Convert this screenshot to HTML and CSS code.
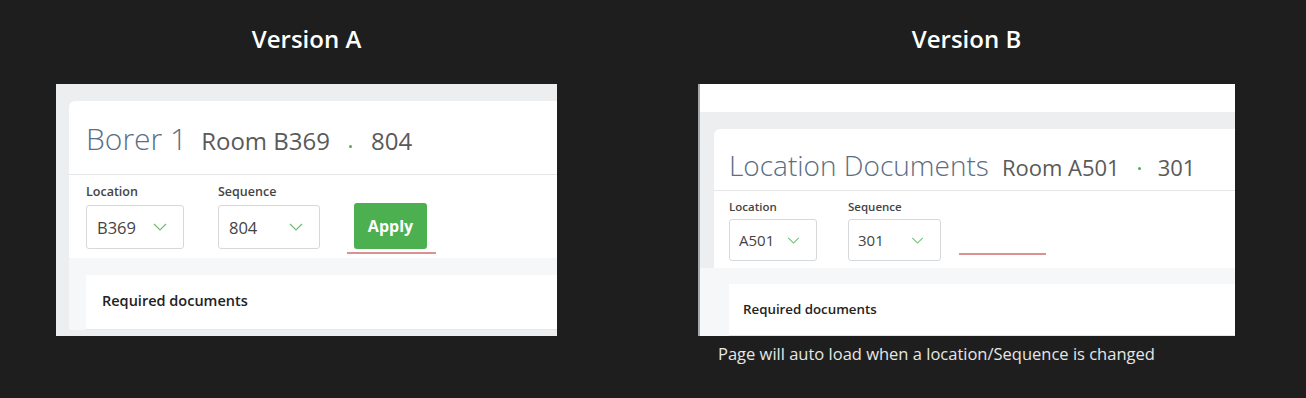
FILE: index.html
```html
<!DOCTYPE html>
<html lang="en">
<head>
  <meta charset="UTF-8">
  <title>Version A / Version B</title>
  <link rel="stylesheet" href="styles.css">
</head>
<body>

  <div class="compare">

    <!-- Version A: filters with an Apply button -->
    <div class="version version-a">
      <h2 class="version-title">Version A</h2>
      <div class="shot shot-a">
        <div class="page-head">
          <div class="head-title">
            <span class="head-name">Borer 1</span>
            <span class="head-room">Room B369</span>
            <span class="head-dot"></span>
            <span class="head-room">804</span>
          </div>
          <div class="filters">
            <div class="field">
              <label>Location</label>
              <div class="select select-loc">
                <span>B369</span>
                <svg class="chevron" viewBox="0 0 14 8"><path d="M1 1l6 6 6-6"/></svg>
              </div>
            </div>
            <div class="field">
              <label>Sequence</label>
              <div class="select select-seq">
                <span>804</span>
                <svg class="chevron" viewBox="0 0 14 8"><path d="M1 1l6 6 6-6"/></svg>
              </div>
            </div>
            <div class="apply-wrap">
              <button class="apply">Apply</button>
              <div class="mark"></div>
            </div>
          </div>
        </div>
        <div class="docs">
          <div class="docs-head">Required documents</div>
        </div>
      </div>
    </div>

    <!-- Version B: auto load, no button -->
    <div class="version version-b">
      <h2 class="version-title">Version B</h2>
      <div class="shot shot-b">
        <div class="topbar"></div>
        <div class="page-head">
          <div class="head-title">
            <span class="head-name">Location Documents</span>
            <span class="head-room">Room A501</span>
            <span class="head-dot"></span>
            <span class="head-room">301</span>
          </div>
          <div class="filters">
            <div class="field">
              <label>Location</label>
              <div class="select select-loc">
                <span>A501</span>
                <svg class="chevron" viewBox="0 0 14 8"><path d="M1 1l6 6 6-6"/></svg>
              </div>
            </div>
            <div class="field">
              <label>Sequence</label>
              <div class="select select-seq">
                <span>301</span>
                <svg class="chevron" viewBox="0 0 14 8"><path d="M1 1l6 6 6-6"/></svg>
              </div>
            </div>
            <div class="apply-wrap">
              <div class="mark"></div>
            </div>
          </div>
        </div>
        <div class="docs">
          <div class="docs-head">Required documents</div>
        </div>
      </div>
      <p class="note">Page will auto load when a location/Sequence is changed</p>
    </div>

  </div>

</body>
</html>
```

FILE: styles.css
```css
/* Basic Styling */
* {
  box-sizing: border-box;
  font-family: "Open Sans", "Liberation Sans", sans-serif;
}
body {
  margin: 0;
  background-color: #1e1e1e;
  color: #333;
}

/* Two columns */
.compare {
  display: flex;
  align-items: flex-start;
  gap: 141px;
  padding-left: 56px;
}
.version-a {
  width: 501px;
}
.version-b {
  width: 537px;
}
.version-title {
  margin: 0 0 30px;
  padding-top: 24px;
  height: 54px;
  line-height: 30px;
  font-size: 24px;
  font-weight: 600;
  color: #fff;
  text-align: center;
}

/* Screenshot frames */
.shot {
  height: 252px;
  overflow: hidden;
  background-color: #eceeef;
}
.page-head {
  background-color: #fff;
  border-radius: 6px 0 0 0;
}
.head-title {
  display: flex;
  align-items: baseline;
  border-bottom: 1px solid #e4e7ea;
  white-space: nowrap;
}
.head-name {
  font-weight: 300;
  color: #5b6e83;
}
.head-room {
  color: #5a5a5a;
}
.head-dot {
  width: 3px;
  height: 3px;
  border-radius: 50%;
  background-color: #4caf50;
  align-self: center;
}

/* Filters */
.filters {
  display: flex;
  align-items: flex-end;
}
.field label {
  display: block;
  font-weight: 600;
  color: #444;
}
.select {
  display: flex;
  align-items: center;
  justify-content: space-between;
  border: 1px solid #d6d9dc;
  border-radius: 3px;
  color: #444;
}
.chevron {
  fill: none;
  stroke: #6cc070;
  stroke-width: 1.2;
}
.apply {
  display: block;
  border: none;
  border-radius: 3px;
  background-color: #4caf50;
  color: #fff;
  font-weight: 700;
}
.mark {
  height: 2px;
  background-color: #d99294;
}

/* Required documents */
.docs {
  background-color: #f6f7f8;
}
.docs-head {
  background-color: #fff;
  font-weight: 600;
  color: #222;
  border-bottom: 1px solid #e4e7ea;
}

/* Version A sizes */
.shot-a {
  padding: 17px 0 0 13px;
}
.shot-a .head-title {
  height: 74px;
  padding: 17px 0 0 17px;
}
.shot-a .head-name {
  font-size: 30px;
  margin-right: 14px;
}
.shot-a .head-room {
  font-size: 24px;
}
.shot-a .head-dot {
  margin: 0 19px 0 19px;
}
.shot-a .filters {
  padding: 8px 0 9px 17px;
  gap: 34px;
}
.shot-a .field label {
  font-size: 12.5px;
  line-height: 18px;
  margin-bottom: 4px;
}
.shot-a .select-loc {
  width: 98px;
}
.shot-a .select-seq {
  width: 102px;
}
.shot-a .select {
  height: 44px;
  padding: 0 16px 0 10px;
  font-size: 16.5px;
}
.shot-a .chevron {
  width: 14px;
  height: 8px;
}
.shot-a .apply-wrap {
  margin-left: -7px;
  padding-left: 7px;
  position: relative;
}
.shot-a .apply {
  width: 73px;
  height: 46px;
  font-size: 16px;
}
.shot-a .mark {
  width: 89px;
  margin: 3px 0 0 -7px;
  position: absolute;
}
.shot-a .docs {
  padding: 17px 0 0 17px;
}
.shot-a .docs-head {
  height: 55px;
  padding: 16px 0 0 16px;
  font-size: 14.5px;
}

/* Version B sizes */
.shot-b {
  border-left: 2px solid #a7a9ab;
}
.shot-b .topbar {
  height: 28px;
  background-color: #fff;
  margin-bottom: 17px;
}
.shot-b .page-head {
  margin-left: 14px;
}
.shot-b .head-title {
  height: 62px;
  padding: 17px 0 0 15px;
}
.shot-b .head-name {
  font-size: 28px;
  margin-right: 13px;
}
.shot-b .head-room {
  font-size: 22px;
}
.shot-b .head-dot {
  margin: 0 17px 0 18px;
}
.shot-b .filters {
  padding: 8px 0 7px 15px;
  gap: 31px;
}
.shot-b .field label {
  font-size: 11.5px;
  line-height: 16px;
  margin-bottom: 4px;
}
.shot-b .select-loc {
  width: 88px;
}
.shot-b .select-seq {
  width: 93px;
}
.shot-b .select {
  height: 42px;
  padding: 0 16px 0 9px;
  font-size: 15px;
}
.shot-b .chevron {
  width: 13px;
  height: 7px;
}
.shot-b .apply-wrap {
  padding: 0 0 6px 0;
  margin-left: -13px;
}
.shot-b .mark {
  width: 87px;
}
.shot-b .docs {
  padding: 16px 0 0 29px;
}
.shot-b .docs-head {
  height: 52px;
  padding: 16px 0 0 14px;
  font-size: 13.3px;
}

.note {
  margin: 6px 0 0 20px;
  font-size: 16.5px;
  color: #e6e6e6;
}
```
